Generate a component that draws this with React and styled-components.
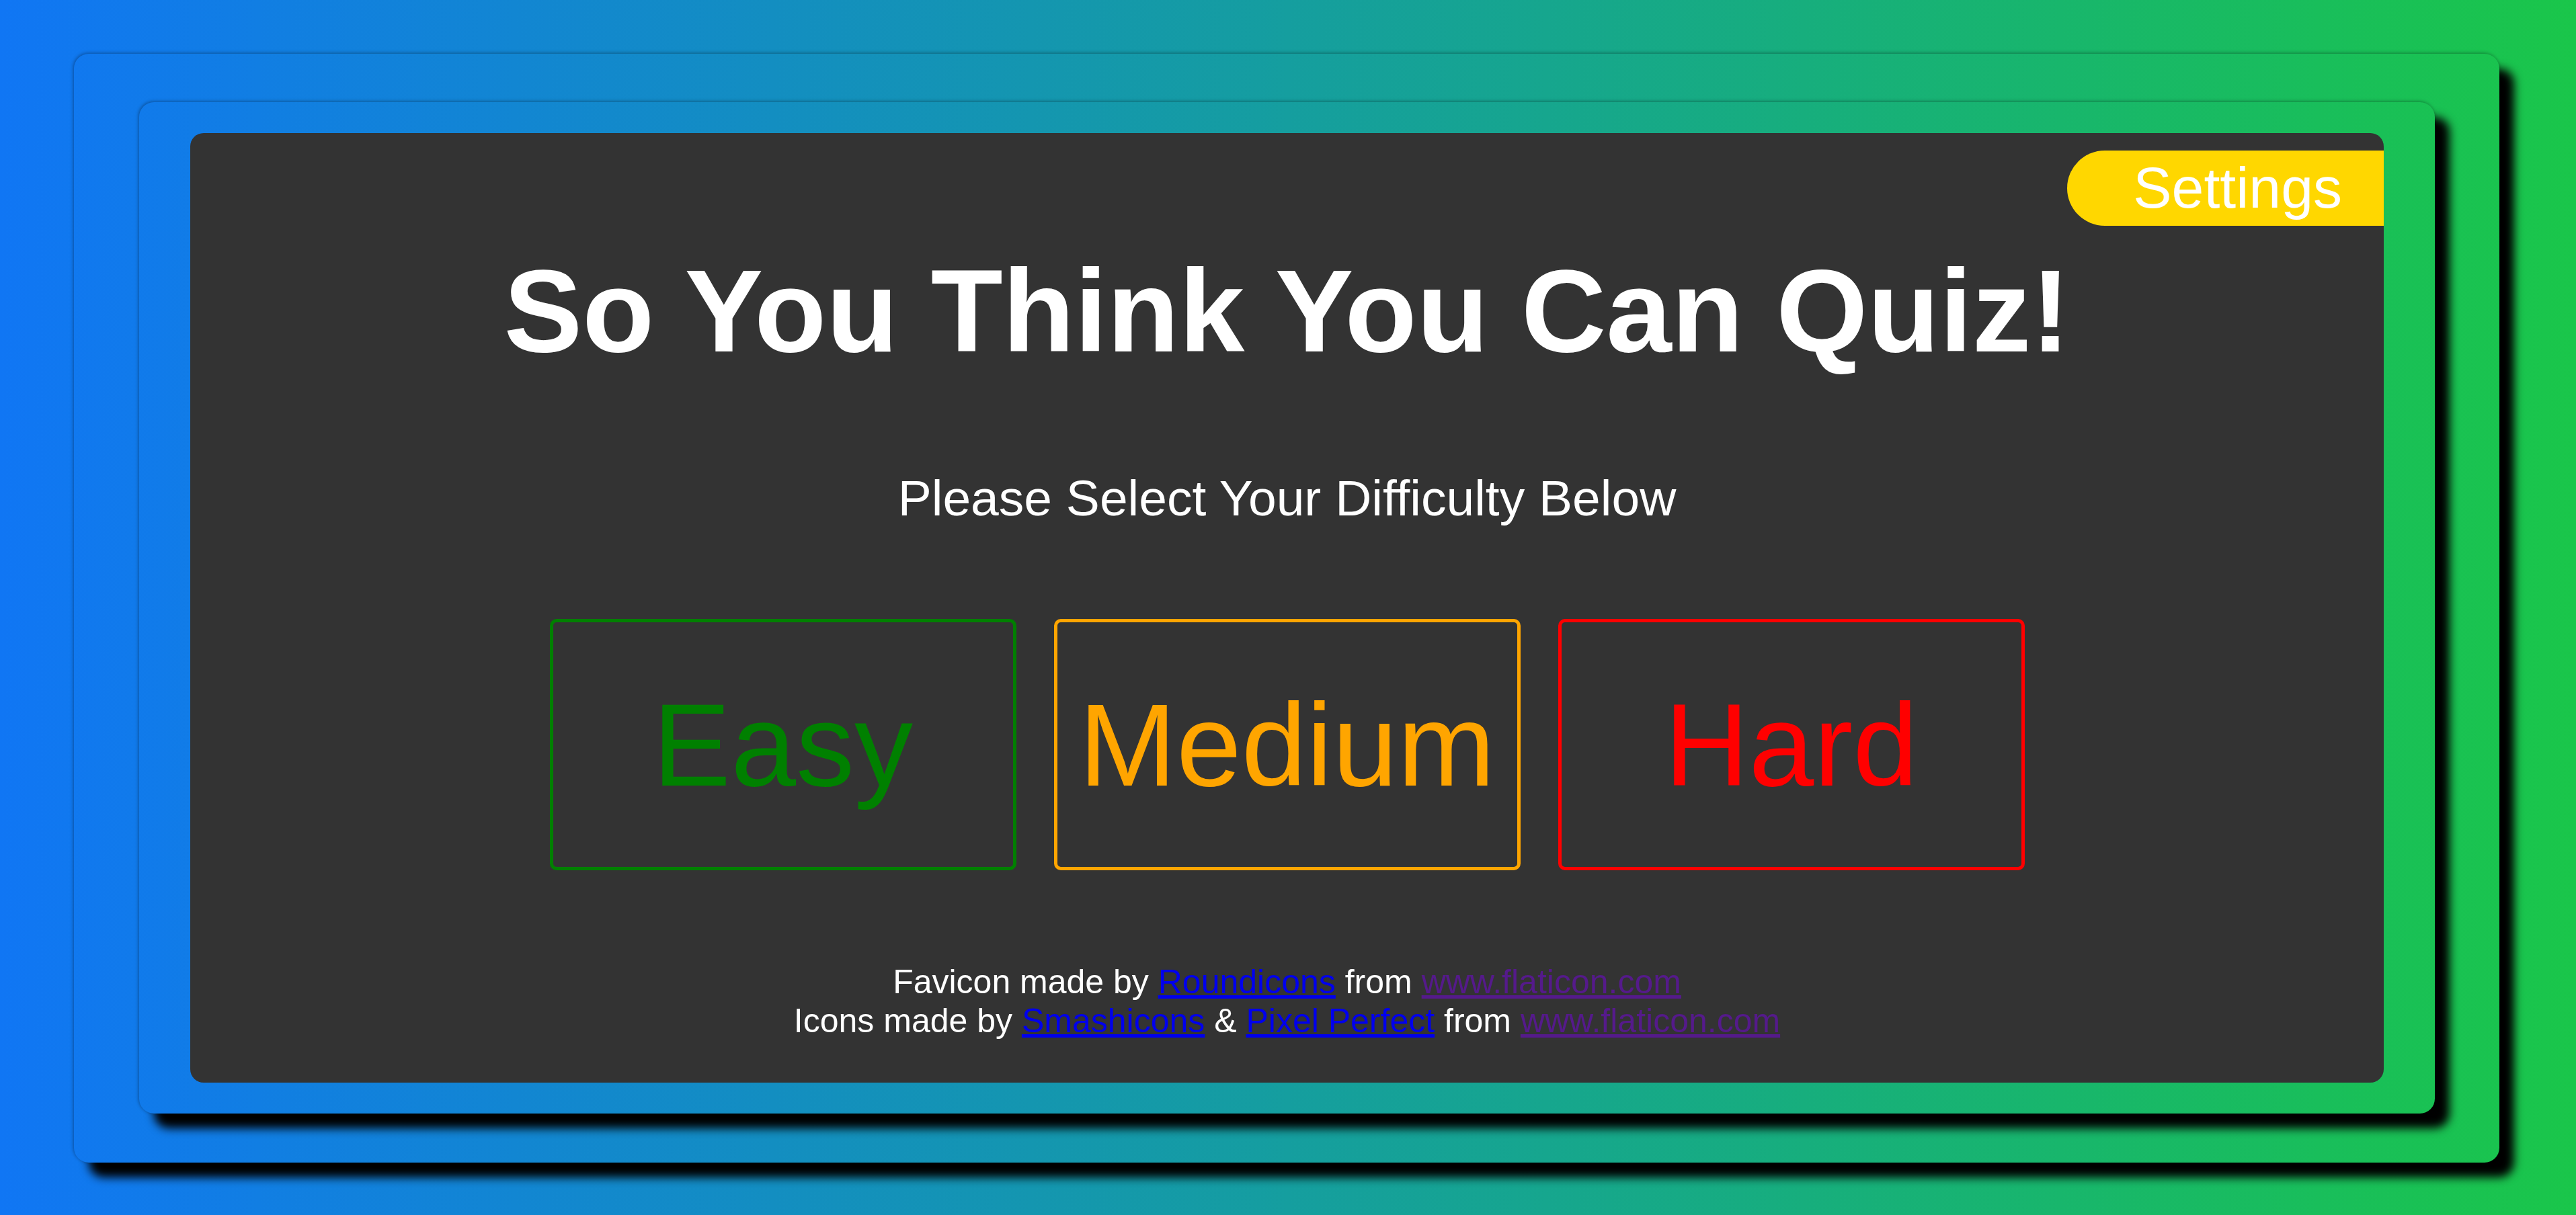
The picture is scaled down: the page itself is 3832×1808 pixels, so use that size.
import React from "react";
import styled, { createGlobalStyle } from "styled-components";

const GlobalStyle = createGlobalStyle`
  html, body {
    margin: 0;
    padding: 0;
  }
  body {
    font-family: 'Liberation Sans', Arial, sans-serif;
    background: linear-gradient(to right, #1076f4, #1ac64a);
  }
`;

function App() {
  return (
    <>
      <GlobalStyle />
      <Page>
        <OuterFrame>
          <InnerFrame>
            <Panel>
              <SettingsRow>
                <SettingsButton>Settings</SettingsButton>
              </SettingsRow>
              <Title>So You Think You Can Quiz!</Title>
              <Subtitle>Please Select Your Difficulty Below</Subtitle>
              <Choices>
                <Difficulty color="#008000">Easy</Difficulty>
                <Difficulty color="#ffa500">Medium</Difficulty>
                <Difficulty color="#ff0000">Hard</Difficulty>
              </Choices>
              <Credits>
                <div>
                  Favicon made by <Link href="#">Roundicons</Link> from{" "}
                  <Link href="#" visited>www.flaticon.com</Link>
                </div>
                <div>
                  Icons made by <Link href="#">Smashicons</Link> &amp;{" "}
                  <Link href="#">Pixel Perfect</Link> from{" "}
                  <Link href="#" visited>www.flaticon.com</Link>
                </div>
              </Credits>
            </Panel>
          </InnerFrame>
        </OuterFrame>
      </Page>
    </>
  );
}

const Page = styled.div`
  height: 100vh;
  box-sizing: border-box;
  padding: 80px 114px 78px 110px;
  display: flex;
`;

const OuterFrame = styled.div`
  flex: 1;
  display: flex;
  padding: 72px 96px 73px 97px;
  border-radius: 22px;
  box-shadow: 22px 22px 14px #000, -1px -1px 5px rgba(0, 0, 0, 0.35);
`;

const InnerFrame = styled.div`
  flex: 1;
  display: flex;
  padding: 46px 76px;
  border-radius: 22px;
  box-shadow: 22px 22px 14px #000, -1px -1px 5px rgba(0, 0, 0, 0.35);
`;

const Panel = styled.main`
  flex: 1;
  display: flex;
  flex-direction: column;
  align-items: center;
  background-color: #333333;
  border-radius: 20px;
  overflow: hidden;
  color: #ffffff;
`;

const SettingsRow = styled.div`
  align-self: stretch;
  display: flex;
  justify-content: flex-end;
  margin-top: 26px;
`;

const SettingsButton = styled.button`
  font-family: 'Liberation Sans', Arial, sans-serif;
  font-size: 86px;
  line-height: normal;
  color: #ffffff;
  background-color: #ffd700;
  border: none;
  border-radius: 60px 0 0 60px;
  padding: 6px 62px 7px 98px;
  cursor: pointer;
`;

const Title = styled.h1`
  margin: 26px 0 0;
  font-size: 175px;
  font-weight: bold;
  line-height: normal;
`;

const Subtitle = styled.p`
  margin: 135px 0 0;
  font-size: 75px;
  line-height: normal;
`;

const Choices = styled.div`
  display: flex;
  gap: 56px;
  margin-top: 137px;
`;

const Difficulty = styled.button`
  box-sizing: border-box;
  width: 694px;
  height: 374px;
  background: transparent;
  border: 5px solid ${(p) => p.color};
  border-radius: 10px;
  color: ${(p) => p.color};
  font-family: 'Liberation Sans', Arial, sans-serif;
  font-size: 174px;
  line-height: normal;
  padding: 0;
  cursor: pointer;
`;

const Credits = styled.footer`
  margin-top: 137px;
  font-size: 50px;
  line-height: normal;
  text-align: center;
`;

const Link = styled.a`
  color: ${(p) => (p.visited ? "#551a8b" : "#0000ee")};
  text-decoration: underline;
`;

export default App;
